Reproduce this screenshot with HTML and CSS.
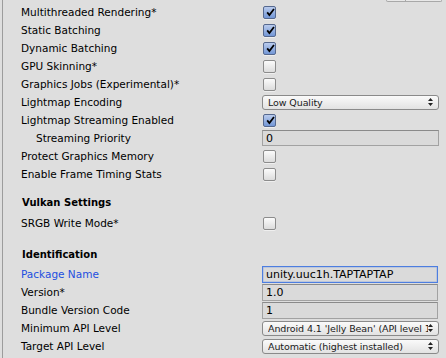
FILE: index.html
```html
<!DOCTYPE html>
<html lang="en">
<head>
  <meta charset="UTF-8" />
  <title>Player Settings</title>
  <link rel="stylesheet" href="styles.css">
</head>
<body>
  <div class="panel">
    <!-- tail of the field above, cut off by the scroll -->
    <div class="cutoff"><span class="cut-a"></span><span class="cut-b"></span></div>

    <div class="row"><span class="label">Multithreaded Rendering*</span><span class="check on"><svg viewBox="0 0 13 13"><path d="M2.6 6.4 L5.2 9.6 L10.6 2.4"/></svg></span></div>
    <div class="row"><span class="label">Static Batching</span><span class="check on"><svg viewBox="0 0 13 13"><path d="M2.6 6.4 L5.2 9.6 L10.6 2.4"/></svg></span></div>
    <div class="row"><span class="label">Dynamic Batching</span><span class="check on"><svg viewBox="0 0 13 13"><path d="M2.6 6.4 L5.2 9.6 L10.6 2.4"/></svg></span></div>
    <div class="row"><span class="label">GPU Skinning*</span><span class="check"></span></div>
    <div class="row"><span class="label">Graphics Jobs (Experimental)*</span><span class="check"></span></div>
    <div class="row"><span class="label">Lightmap Encoding</span>
      <span class="popup"><span class="popup-text">Low Quality</span><svg class="arrows" viewBox="0 0 5 8"><path d="M2.5 0 L5 3 L0 3 Z M2.5 8 L5 5 L0 5 Z"/></svg></span>
    </div>
    <div class="row"><span class="label">Lightmap Streaming Enabled</span><span class="check on"><svg viewBox="0 0 13 13"><path d="M2.6 6.4 L5.2 9.6 L10.6 2.4"/></svg></span></div>
    <div class="row"><span class="label sub">Streaming Priority</span><span class="field tall">0</span></div>
    <div class="row"><span class="label">Protect Graphics Memory</span><span class="check"></span></div>
    <div class="row"><span class="label">Enable Frame Timing Stats</span><span class="check"></span></div>

    <div class="heading vulkan">Vulkan Settings</div>
    <div class="row srgb"><span class="label">SRGB Write Mode*</span><span class="check"></span></div>

    <div class="heading ident">Identification</div>
    <div class="row first"><span class="label focus">Package Name</span><span class="field active">unity.uuc1h.TAPTAPTAP</span></div>
    <div class="row"><span class="label">Version*</span><span class="field">1.0</span></div>
    <div class="row"><span class="label">Bundle Version Code</span><span class="field">1</span></div>
    <div class="row"><span class="label">Minimum API Level</span>
      <span class="popup"><span class="popup-text">Android 4.1 'Jelly Bean' (API level 16)</span><svg class="arrows" viewBox="0 0 5 8"><path d="M2.5 0 L5 3 L0 3 Z M2.5 8 L5 5 L0 5 Z"/></svg></span>
    </div>
    <div class="row"><span class="label">Target API Level</span>
      <span class="popup"><span class="popup-text">Automatic (highest installed)</span><svg class="arrows" viewBox="0 0 5 8"><path d="M2.5 0 L5 3 L0 3 Z M2.5 8 L5 5 L0 5 Z"/></svg></span>
    </div>
  </div>
</body>
</html>
```

FILE: styles.css
```css
* { margin: 0; padding: 0; box-sizing: border-box; }
html, body {
  height: 100%;
  background: #dedede;
  font-family: 'DejaVu Sans', sans-serif;
  font-size: 10.5px;
  color: #000;
  overflow: hidden;
}

.panel {
  height: 100%;
  margin-left: 2px;
  border-left: 1px solid #9c9c9c;
}

/* bottom edge of the control scrolled off the top */
.cutoff {
  height: 3px;
  display: flex;
  padding-left: 383px;
}
.cutoff span {
  height: 2px;
  border: 1px solid #a8a8a8;
  border-top: none;
  background: #e8e8e8;
}
.cut-a { width: 20px; border-radius: 0 0 0 2px; }
.cut-b { width: 36px; border-left: none !important; border-radius: 0 0 2px 0; }

.row {
  height: 18px;
  display: flex;
  align-items: center;
}
.label {
  width: 259px;
  padding-left: 18px;
  white-space: nowrap;
}
.label.sub { padding-left: 33px; }
.label.focus { color: #1d4fe0; }

.heading {
  height: 18px;
  display: flex;
  align-items: center;
  padding-left: 19px;
  font-weight: bold;
  font-size: 10px;
}
.heading.vulkan { margin-top: 10px; }
.row.srgb { margin-top: 3px; }
.heading.ident { margin-top: 13px; }
.row.first { margin-top: 2px; }

/* checkbox */
.check {
  width: 13px;
  height: 13px;
  margin-left: 1px;
  border: 1px solid #8c8c8c;
  border-radius: 2px;
  background: linear-gradient(#fbfbfb, #dcdcdc);
  box-shadow: 0 1px 0 rgba(255,255,255,0.5);
}
.check.on {
  border-color: #56698f;
  background: linear-gradient(#b9cbed, #7397d6);
}
.check svg {
  display: block;
  width: 11px;
  height: 11px;
  margin: 0 0 0 1px;
  fill: none;
  stroke: #000;
  stroke-width: 2.1;
}

/* popup menu */
.popup {
  width: 177px;
  height: 15px;
  display: flex;
  align-items: center;
  padding: 0 5px 0 5px;
  border: 1px solid #8a8a8a;
  border-radius: 3px;
  background: linear-gradient(#fafafa, #e2e2e2);
  font-size: 9.5px;
  color: #1a1a1a;
}
.popup-text {
  flex: 1;
  min-width: 0;
  overflow: hidden;
  white-space: nowrap;
  letter-spacing: -0.1px;
}
.arrows {
  flex: none;
  width: 5px;
  height: 8px;
  fill: #222;
}

/* text fields */
.field {
  width: 176px;
  height: 17px;
  display: flex;
  align-items: center;
  padding-left: 3px;
  border: 1px solid #a2a2a2;
  border-top-color: #8a8a8a;
  background: #dadada;
  font-size: 11px;
  color: #000;
}
.field.tall { width: 177px; height: 16px; }
.field.active {
  border-color: #4d7ee0;
  box-shadow: inset 0 0 0 0.5px rgba(77,126,224,0.4);
}
```
